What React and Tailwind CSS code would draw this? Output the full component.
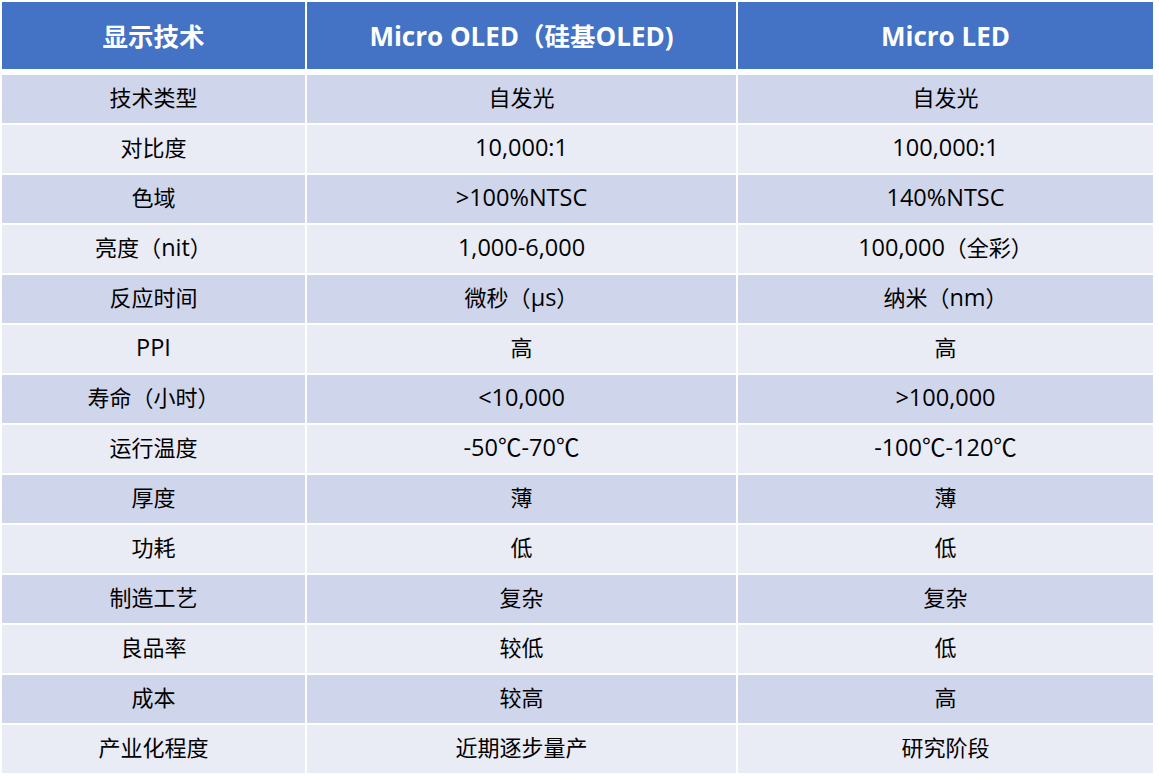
const rows = [
  ['技术类型', '自发光', '自发光'],
  ['对比度', '10,000:1', '100,000:1'],
  ['色域', '>100%NTSC', '140%NTSC'],
  ['亮度（nit）', '1,000-6,000', '100,000（全彩）'],
  ['反应时间', '微秒（μs）', '纳米（nm）'],
  ['PPI', '高', '高'],
  ['寿命（小时）', '<10,000', '>100,000'],
  ['运行温度', '-50℃-70℃', '-100℃-120℃'],
  ['厚度', '薄', '薄'],
  ['功耗', '低', '低'],
  ['制造工艺', '复杂', '复杂'],
  ['良品率', '较低', '低'],
  ['成本', '较高', '高'],
  ['产业化程度', '近期逐步量产', '研究阶段'],
]

const font = { fontFamily: '"Open Sans", "Noto Sans CJK SC", sans-serif' }

// latin runs render a bit larger than the CJK ones, like YaHei does
function Mixed({ text, latin }) {
  const parts = text.split(/([\u3000-\u9fff\uff00-\uffef]+)/).filter(Boolean)
  return parts.map((p, k) =>
    /[\u3000-\u9fff\uff00-\uffef]/.test(p) ? (
      <span key={k}>{p}</span>
    ) : (
      <span key={k} className={latin}>{p}</span>
    )
  )
}

export default function App() {
  return (
    <div className="w-[1159px] h-[777px] bg-white pt-[2px] pl-[2px]" style={font}>
      <div className="grid grid-cols-[303px_429px_415px] gap-x-[2px] gap-y-[2px]">
        {['显示技术', 'Micro OLED（硅基OLED)', 'Micro LED'].map((h) => (
          <div
            key={h}
            className="h-[67px] mb-[4px] pt-[2px] bg-[#4472c4] text-white font-bold text-[25.5px] flex items-center justify-center"
          >
            <Mixed text={h} latin="text-[26px]" />
          </div>
        ))}
        {rows.map((r, i) =>
          r.map((c, j) => (
            <div
              key={i + '-' + j}
              className={`h-[48px] pb-[3px] flex items-center justify-center text-[22px] text-black ${
                i % 2 === 0 ? 'bg-[#cfd5ea]' : 'bg-[#e9ebf5]'
              }`}
            >
              <Mixed text={c} latin="text-[23.5px]" />
            </div>
          ))
        )}
      </div>
    </div>
  )
}
